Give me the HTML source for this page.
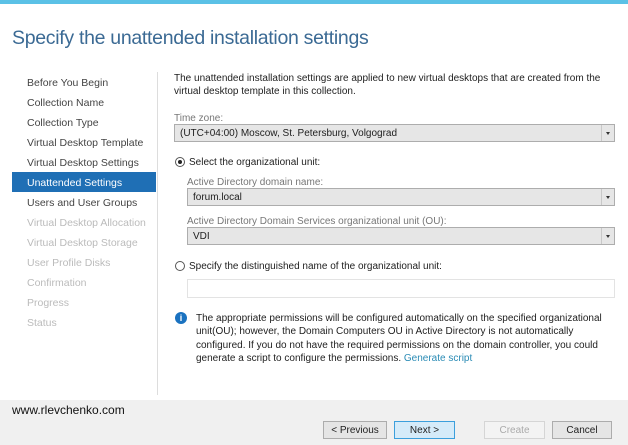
<!DOCTYPE html><html><head><style>
*{margin:0;padding:0;box-sizing:border-box}
body{width:628px;height:445px;background:#fff;font-family:"Liberation Sans",sans-serif;font-size:10px;color:#1e1e1e;position:relative;overflow:hidden}
.a{position:absolute;white-space:nowrap}
.nav{position:absolute;left:27px;font-size:10.5px;color:#444}
.dis{color:#bbb}
.combo{position:absolute;background:#e6e6e6;border:1px solid #adadad;height:18px;padding:3px 0 0 5px}
.combo:after{content:"";position:absolute;right:0;top:0;width:12px;height:16px;border-left:1px solid #c8c8c8}
.combo b{position:absolute;right:4px;top:7px;border-left:2.5px solid transparent;border-right:2.5px solid transparent;border-top:3px solid #333;z-index:2}
.lbl{color:#777}
.btn{position:absolute;top:421px;height:18px;border:1px solid #acacac;background:#e5e5e5;text-align:center;padding-top:3px;font-size:10px}
.radio{position:absolute;width:10px;height:10px;border:1px solid #555;border-radius:50%;background:#fff}
</style></head><body>
<div class="a" style="left:0;top:0;width:628px;height:4px;background:#5bc1e6"></div>
<div class="a" style="left:12px;top:27px;font-size:19.5px;color:#3b6a94;letter-spacing:-0.3px">Specify the unattended installation settings</div>
<div class="a" style="left:157px;top:72px;width:1px;height:323px;background:#ddd"></div>
<div class="a" style="left:12px;top:172px;width:144px;height:20px;background:#1f6fb5"></div>
<div class="nav" style="top:77px">Before You Begin</div>
<div class="nav" style="top:97px">Collection Name</div>
<div class="nav" style="top:117px">Collection Type</div>
<div class="nav" style="top:137px">Virtual Desktop Template</div>
<div class="nav" style="top:157px">Virtual Desktop Settings</div>
<div class="nav" style="top:177px;color:#fff">Unattended Settings</div>
<div class="nav" style="top:197px">Users and User Groups</div>
<div class="nav dis" style="top:217px">Virtual Desktop Allocation</div>
<div class="nav dis" style="top:237px">Virtual Desktop Storage</div>
<div class="nav dis" style="top:257px">User Profile Disks</div>
<div class="nav dis" style="top:277px">Confirmation</div>
<div class="nav dis" style="top:297px">Progress</div>
<div class="nav dis" style="top:317px">Status</div>

<div class="a" style="left:174px;top:72px;line-height:13px">The unattended installation settings are applied to new virtual desktops that are created from the<br>virtual desktop template in this collection.</div>
<div class="a lbl" style="left:174px;top:113px">Time zone:</div>
<div class="combo a" style="left:174px;top:124px;width:441px">(UTC+04:00) Moscow, St. Petersburg, Volgograd<b></b></div>
<div class="radio" style="left:175px;top:157px"><div style="position:absolute;left:2px;top:2px;width:4px;height:4px;border-radius:50%;background:#222"></div></div>
<div class="a" style="left:189px;top:157px">Select the organizational unit:</div>
<div class="a lbl" style="left:187px;top:177px">Active Directory domain name:</div>
<div class="combo a" style="left:187px;top:188px;width:428px">forum.local<b></b></div>
<div class="a lbl" style="left:187px;top:216px">Active Directory Domain Services organizational unit (OU):</div>
<div class="combo a" style="left:187px;top:227px;width:428px">VDI<b></b></div>
<div class="radio" style="left:175px;top:261px"></div>
<div class="a" style="left:189px;top:261px">Specify the distinguished name of the organizational unit:</div>
<div class="a" style="left:187px;top:279px;width:428px;height:19px;border:1px solid #e3e3e3"></div>
<div class="a" style="left:175px;top:312px;width:12px;height:12px;border-radius:50%;background:#1a72c0;color:#fff;font-weight:bold;font-size:9px;text-align:center;line-height:12px">i</div>
<div class="a" style="left:196px;top:312px;line-height:13.3px">The appropriate permissions will be configured automatically on the specified organizational<br>unit(OU); however, the Domain Computers OU in Active Directory is not automatically<br>configured. If you do not have the required permissions on the domain controller, you could<br>generate a script to configure the permissions. <span style="color:#2a8bb5">Generate script</span></div>

<div class="a" style="left:0;top:400px;width:628px;height:45px;background:#f0f0f0"></div>
<div class="a" style="left:12px;top:403px;font-size:12px;color:#111">www.rlevchenko.com</div>
<div class="btn" style="left:323px;width:64px">&lt; Previous</div>
<div class="btn" style="left:394px;width:61px;background:#d5ebf9;border-color:#3c9fdc">Next &gt;</div>
<div class="btn" style="left:484px;width:61px;background:#f3f3f3;border-color:#d5d5d5;color:#aaa">Create</div>
<div class="btn" style="left:552px;width:60px">Cancel</div>
</body></html>
